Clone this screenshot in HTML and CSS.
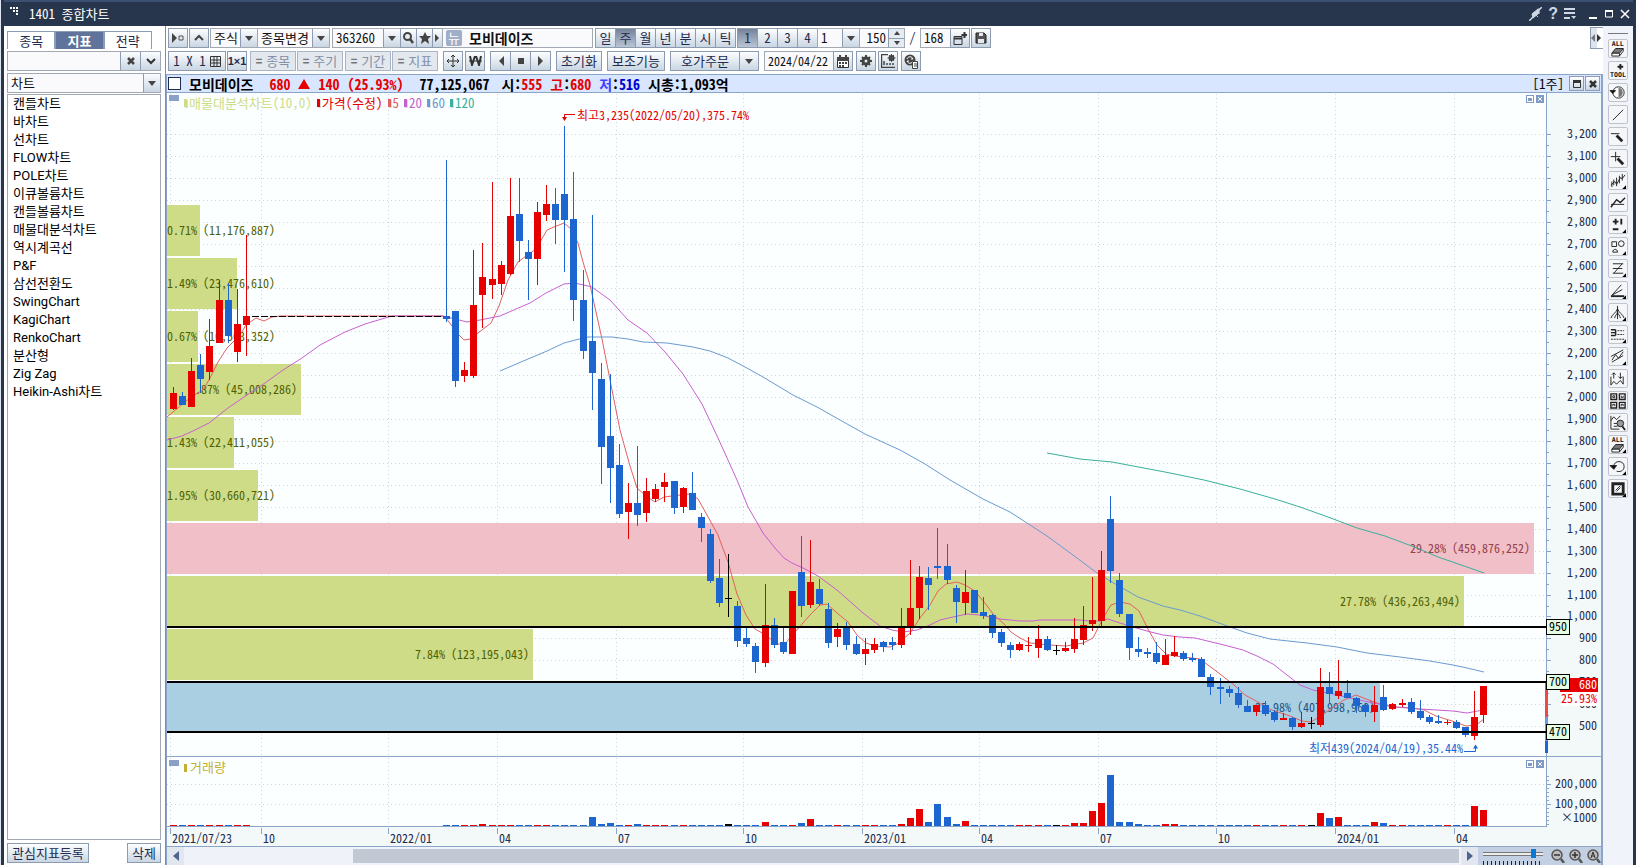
FILE: index.html
```html
<!DOCTYPE html>
<html lang="ko">
<head>
<meta charset="utf-8">
<title>1401 종합차트</title>
<link rel="stylesheet" href="styles.css">
</head>
<body>
<div class="window">
  <header class="titlebar">
    <svg class="grip" width="10" height="10" viewBox="0 0 10 10" fill="#fff"><path d="M0 0h2v2H0zM3 0h2v2H3zM6 0h2v2H6zM3 3h2v2H3zM6 3h2v2H6zM6 6h2v2H6z"/></svg>
    <h1>1401 종합차트</h1>
    <div class="winctl">
      <button aria-label="연결"><svg width="13" height="14" viewBox="0 0 13 14" stroke="#cfd8e4" fill="none"><path d="M0 14l4-4M9 4l4-4" stroke-width="1.500"/><path d="M4 11L3 7l6-5 1 4z" fill="#cfd8e4"/><path d="M4 5l5 5M10 1v6"/></svg></button>
      <button class="help" aria-label="도움말">?</button>
      <button aria-label="메뉴"><svg width="13" height="12" viewBox="0 0 13 12" fill="#cfd8e4"><path d="M0 0h11v2H0zM0 4h11v2H0zM0 9h6v2H0zM7 8h5l-2 3z"/></svg></button>
      <button class="gap" aria-label="최소화"><svg width="10" height="10"><path d="M1 8h8v2H1z" fill="#fff"/></svg></button>
      <button aria-label="최대화"><svg width="10" height="10"><path d="M1.500 2h7v6h-7z" fill="none" stroke="#fff"/><path d="M1 1h8v2H1z" fill="#fff"/></svg></button>
      <button aria-label="닫기"><svg width="10" height="10"><path d="M1 1l8 8M9 1L1 9" stroke="#fff" stroke-width="1.500"/></svg></button>
    </div>
  </header>
  <div class="body">
    <aside class="left">
      <nav class="tabs"><button>종목</button><button class="on">지표</button><button>전략</button></nav>
      <div class="field search"><input type="text" aria-label="지표 검색"><button aria-label="지우기"><svg width="8" height="8"><path d="M1 1l6 6M7 1L1 7" stroke="#444" stroke-width="2.500"/></svg></button><button aria-label="펼치기"><svg width="10" height="8"><path d="M1 2l4 4 4-4" stroke="#333" stroke-width="2" fill="none"/></svg></button></div>
      <label class="field pick"><select aria-label="분류"><option>차트</option></select><span class="arr"></span></label>
      <ul class="list">
        <li>캔들차트</li><li>바차트</li><li>선차트</li><li>FLOW차트</li><li>POLE차트</li><li>이큐볼륨차트</li><li>캔들볼륨차트</li><li>매물대분석차트</li><li>역시계곡선</li><li>P&amp;F</li><li>삼선전환도</li><li>SwingChart</li><li>KagiChart</li><li>RenkoChart</li><li>분산형</li><li>Zig Zag</li><li>Heikin-Ashi차트</li>
      </ul>
      <div class="leftfoot"><button class="btn">관심지표등록</button><button class="btn">삭제</button></div>
    </aside>

    <main class="main">
      <div class="bars">
        <div class="bar">
          <button class="btn sq" aria-label="이동"><svg width="12" height="10"><path d="M0 0l5 5-5 5z" fill="#444"/><path d="M7 3h4v4H7z" fill="none" stroke="#555"/></svg></button>
          <button class="btn sq" aria-label="위로"><svg width="10" height="8"><path d="M1 6l4-4 4 4" stroke="#444" stroke-width="2" fill="none"/></svg></button>
          <div class="group">
            <label class="field w47"><select aria-label="시장"><option>주식</option></select><span class="arr"></span></label>
            <label class="field w72"><select aria-label="종목변경"><option>종목변경</option></select><span class="arr"></span></label>
          </div>
          <div class="group g1">
            <label class="field w68"><input type="text" value="363260" aria-label="종목코드"><span class="arr"></span></label>
            <button class="btn w16" aria-label="검색"><svg width="11" height="12"><circle cx="4.500" cy="4.500" r="3.500" fill="none" stroke="#444" stroke-width="2"/><path d="M7 7l3 4" stroke="#444" stroke-width="2.500"/></svg></button>
            <button class="btn w16" aria-label="관심"><svg width="12" height="12"><path d="M6 0l2 4h4L9 7l1 5-4-3-4 3 1-5-3-3h4z" fill="#444"/></svg></button>
            <button class="btn w10" aria-label="다음"><svg width="5" height="8"><path d="M0 0l4 4-4 4z" fill="#444"/></svg></button>
            <div class="field w150 name"><span class="news">뉴</span><b>모비데이즈</b></div>
          </div>
          <div class="group seg g1"><button class="btn">일</button><button class="btn on">주</button><button class="btn">월</button><button class="btn">년</button><button class="btn">분</button><button class="btn">시</button><button class="btn">틱</button></div>
          <div class="group seg"><button class="btn on">1</button><button class="btn">2</button><button class="btn">3</button><button class="btn">4</button><label class="field w42"><select aria-label="단위"><option>1</option></select><span class="arr"></span></label><div class="field w46"><input class="num" type="text" value="150" aria-label="봉 개수"><span class="spin"><button aria-label="증가"></button><button aria-label="감소"></button></span></div></div>
          <span class="slash">/</span>
          <div class="group"><div class="field w30"><input type="text" value="168" aria-label="전체 개수"></div>
          <button class="btn sq" aria-label="새 창"><svg width="14" height="13" viewBox="0 0 14 13" fill="none" stroke="#333"><path d="M1 4.500h8v8H1z"/><path d="M1 6.500h8M11.500 0v6M8.500 3h6" stroke-width="2"/></svg></button></div>
          <button class="btn sq" aria-label="저장"><svg width="12" height="12" viewBox="0 0 12 12"><path d="M1 1h8l2 2v8H1z" fill="#555" stroke="#222"/><path d="M4 1h4v3H4zM3 7h6v4H3z" fill="#e4e9ef"/></svg></button>
        </div>
        <div class="bar two">
          <button class="btn w58">1 X 1 <svg width="11" height="11"><path d="M.500.500h10v10H.500zM0 4h11M0 7h11M4 0v11M7 0v11" fill="none" stroke="#333"/></svg></button>
          <button class="btn sq tiny">1×1</button>
          <button class="btn off g2"><i>=</i>종목</button><button class="btn off"><i>=</i>주기</button><button class="btn off g1"><i>=</i>기간</button><button class="btn off"><i>=</i>지표</button>
          <button class="btn sq g3" aria-label="이동"><svg width="14" height="14" fill="none" stroke="#333"><path d="M7 1v12M1 7h12M5 3l2-2 2 2M5 11l2 2 2-2M3 5L1 7l2 2M11 5l2 2-2 2"/></svg></button>
          <button class="btn sq g1" aria-label="원화"><svg width="13" height="10" fill="none" stroke="#333"><path d="M1 0l2 9 3-9 1 0 3 9 2-9" stroke-width="2"/><path d="M0 5h13"/></svg></button>
          <div class="group g3 seg"><button class="btn" aria-label="이전"><svg width="6" height="10"><path d="M6 0v10L1 5z" fill="#444"/></svg></button><button class="btn" aria-label="정지"><svg width="6" height="6"><path d="M0 0h6v6H0z" fill="#444"/></svg></button><button class="btn" aria-label="다음"><svg width="6" height="10"><path d="M0 0v10l5-5z" fill="#444"/></svg></button></div>
          <button class="btn w46 g3">초기화</button>
          <button class="btn w58 g3">보조기능</button>
          <div class="group g3"><button class="btn w70">호가주문</button><button class="btn sq" aria-label="호가주문 메뉴"><span class="tri"></span></button></div>
          <div class="group g3"><div class="field w70"><input class="date" type="text" value="2024/04/22" aria-label="날짜"></div><button class="btn sq" aria-label="달력"><svg width="12" height="13"><path d="M.500 2.500h11v10H.500z" fill="#fff" stroke="#333"/><path d="M0 2h12v4H0zM2 0h2v3H2zM8 0h2v3H8zM2 7h2v2H2zM5 7h2v2H5zM8 7h2v2H8zM2 10h2v2H2zM5 10h2v2H5z" fill="#444"/></svg></button></div>
          <button class="btn sq g2" aria-label="설정"><svg width="12" height="12"><circle cx="6" cy="6" r="3" fill="none" stroke="#444" stroke-width="3"/><path d="M6 0v3M6 9v3M0 6h3M9 6h3M2 2l2 2M8 8l2 2M10 2L8 4M4 8l-2 2" stroke="#444" stroke-width="2"/></svg></button>
          <button class="btn sq g1" aria-label="차트설정"><svg width="15" height="14" fill="none" stroke="#444"><path d="M7 .500H.500v13H14M3 11V7M6 11V9M9 11v-2M12 11v-2" stroke-width="1.500"/><circle cx="10.500" cy="4" r="2" stroke-width="2"/><path d="M10.500 0v8M6.500 4h8M8 1l5 6M13 1L8 7"/></svg></button>
          <button class="btn sq g2" aria-label="동기화"><svg width="15" height="15"><circle cx="6" cy="6" r="5.500" fill="#444"/><path d="M3 5c1-3 5-3 6 0H7M9 7c-1 3-5 3-6 0h2" stroke="#fff" fill="none"/><path d="M8.500 7.500h5v7h-5z" fill="#fff" stroke="#444"/><path d="M10 10h3M10 12h3" stroke="#444"/></svg></button>
        </div>
        <button class="fold" aria-label="접기"><svg width="10" height="8"><path d="M4 0v8L0 4z" fill="#777"/><path d="M6 0v8l4-4z" fill="#333"/></svg></button>
      </div>

      <section class="chartbox">
        <div class="quote">
          <input type="checkbox" aria-label="종목 선택">
          <b class="q-name">모비데이즈</b>
          <b class="up">680</b><svg width="12" height="10"><path d="M6 0l6 10H0z" fill="#e60000"/></svg><b class="up">140</b><b class="up">(25.93%)</b>
          <b class="q-vol">77,125,067</b>
          <b>시:<span class="up">555</span></b><b><span class="up">고</span>:<span class="up">680</span></b><b><span class="lo">저</span>:<span class="dn">516</span></b><b>시총:1,093억</b>
          <span class="period">[1주]</span>
          <button class="btn mini" aria-label="창 크기"><svg width="8" height="8"><path d="M.500.500h7v7h-7z" fill="none" stroke="#333"/><path d="M0 0h8v3H0z" fill="#333"/></svg></button>
          <button class="btn mini" aria-label="차트 닫기"><svg width="8" height="8"><path d="M1 1l6 6M7 1L1 7" stroke="#333" stroke-width="2.500"/></svg></button>
        </div>
        <div class="plot">
          <svg id="chart" viewBox="167 93 1434 754" preserveAspectRatio="xMinYMin meet"></svg>
          <div class="legend">
            <span class="c-prof">매물대분석차트(10,0)</span><span class="c-price">가격(수정)</span><span class="c-5">5</span><span class="c-20">20</span><span class="c-60">60</span><span class="c-120">120</span>
          </div>
        </div>
        <div class="scroll">
          <button aria-label="왼쪽"><svg width="6" height="10"><path d="M6 0v10L0 5z" fill="#4d6491"/></svg></button>
          <div class="track"><div class="thumb"></div></div>
          <button aria-label="오른쪽"><svg width="6" height="10"><path d="M0 0v10l6-5z" fill="#4d6491"/></svg></button>
          <div class="zoom">
            <div class="range"><input type="range" min="0" max="100" value="88" aria-label="확대"><span class="ticks"></span></div>
            <button aria-label="축소"><svg width="14" height="14"><circle cx="6" cy="6" r="5" fill="#bbb" stroke="#555" stroke-width="1.500"/><path d="M3 6h6" stroke="#333" stroke-width="1.500"/><path d="M10 10l3 4" stroke="#555" stroke-width="2.500"/></svg></button>
            <button aria-label="확대"><svg width="14" height="14"><circle cx="6" cy="6" r="5" fill="#bbb" stroke="#555" stroke-width="1.500"/><path d="M3 6h6M6 3v6" stroke="#333" stroke-width="1.500"/><path d="M10 10l3 4" stroke="#555" stroke-width="2.500"/></svg></button>
            <button aria-label="전체"><svg width="14" height="14"><circle cx="6" cy="6" r="5" fill="#bbb" stroke="#555" stroke-width="1.500"/><path d="M4 9l2-6 2 6M4 7h4" fill="none" stroke="#333"/><path d="M10 10l3 4" stroke="#555" stroke-width="2.500"/></svg></button>
          </div>
        </div>
      </section>
    </main>

    <aside class="tools" id="tools"><hr></aside>
  </div>
</div>
<script src="chart.js"></script>
</body>
</html>
```

FILE: styles.css
```css
* { box-sizing: border-box; }
body {
  margin: 0;
  background: #dfe5ee;
  color: #222c4e;
  font: 13px/16px "Noto Sans CJK KR", "Liberation Sans", sans-serif;
  font-feature-settings: "hwid";
}
button, input, select {
  margin: 0;
  padding: 0;
  border: 0;
  background: none;
  color: inherit;
  font: inherit;
  font-feature-settings: inherit;
  border-radius: 0;
}
svg { display: block; flex: none; }

.window {
  display: flex;
  flex-direction: column;
  height: 100vh;
  min-height: 600px;
  margin-left: 1px;
  border: solid #28364d;
  border-width: 0 3px 0 3px;
  background: #fff;
}
.titlebar {
  display: flex;
  align-items: center;
  height: 26px;
  flex: none;
  padding: 0 3px 0 6px;
  border-top: 2px solid #3b4f70;
  background: #28364d;
  color: #fff;
}
.grip { margin-bottom: 4px; }
.titlebar h1 {
  margin: 0 auto 0 9px;
  font-size: 13px;
  font-weight: 400;
}
.winctl { display: flex; align-items: center; gap: 6px; }
.winctl button { display: flex; align-items: center; }
.winctl .gap { margin-left: 5px; }
.winctl .help { color: #cfd8e4; font: bold 16px/16px "Liberation Sans", sans-serif; }

.body { display: flex; flex: 1; min-height: 0; }

/* indicator list */
.left {
  display: flex;
  flex-direction: column;
  width: 162px;
  flex: none;
  padding: 5px 4px 2px 3px;
  border-right: 1px solid #7f8da3;
}
.tabs { display: flex; height: 18px; margin-right: 9px; }
.tabs button {
  flex: 1;
  border: 1px solid #8b9cba;
  border-bottom: 0;
  line-height: 14px;
}
.tabs .on { background: #5f739b; color: #fff; font-weight: 700; }
.field {
  display: flex;
  height: 20px;
  border: 1px solid #a3a9b3;
  background: #fafafc;
  color: #111;
}
.field input, .field select {
  flex: 1;
  width: 10px;
  min-width: 0;
  padding-left: 3px;
  appearance: none;
  outline: 0;
}
.search { margin-top: 2px; }
.search button {
  display: flex;
  align-items: center;
  justify-content: center;
  width: 20px;
  border-left: 1px solid #8c9bb0;
  background: linear-gradient(#fbfdff, #c9d6e3);
}
.pick { margin-top: 2px; }
.arr, .tri { display: flex; align-items: center; justify-content: center; }
.arr {
  width: 17px;
  flex: none;
  border-left: 1px solid #8c9bb0;
  background: linear-gradient(#fbfdff, #c9d6e3);
}
.arr::after, .tri::after {
  content: "";
  border: 4px solid transparent;
  border-top: 5px solid #444;
  border-bottom: 0;
}
.list {
  flex: 1;
  margin: 1px 0 3px;
  padding: 0 0 0 5px;
  border: 1px solid #a3a9b3;
  overflow: hidden;
  list-style: none;
  color: #000;
  font-family: Roboto, "Noto Sans CJK KR", sans-serif;
  font-feature-settings: normal;
}
.list li { font-size: 13px; line-height: 18px; }
.leftfoot { display: flex; justify-content: space-between; }

.btn {
  display: flex;
  align-items: center;
  justify-content: center;
  flex: none;
  height: 20px;
  padding: 0 4px;
  border: 1px solid #8c9bb0;
  background: linear-gradient(#fdfeff, #c9d6e3);
  line-height: 16px;
  white-space: nowrap;
}

/* toolbars */
.main { display: flex; flex-direction: column; flex: 1; min-width: 0; }
.bars { position: relative; height: 48px; flex: none; padding: 2px 0 0 2px; }
.bar { display: flex; gap: 1px; height: 20px; }
.bar.two { margin-top: 3px; }
.group { display: flex; }
.group > * + * { margin-left: -1px; }
.sq { width: 20px; padding: 0; }
.tiny { font: bold 11px/16px "Liberation Sans", sans-serif; }
.off { width: 46px; background: #e3e8ef; border-color: #a9b4c4; color: #8390a6; gap: 4px; padding: 0; }
.off i { font-style: normal; font-weight: 700; color: #777; }
.g1 { margin-left: 1px; }
.g2 { margin-left: 2px; }
.g3 { margin-left: 4px; }
.w10 { width: 11px; padding: 0; }
.w16 { width: 17px; padding: 0; }
.w30 { width: 31px; }
.w42 { width: 43px; }
.w46 { width: 46px; }
.w47 { width: 48px; }
.w58 { width: 58px; gap: 4px; }
.w68 { width: 69px; }
.w70 { width: 70px; }
.w72 { width: 73px; }
.w150 { width: 151px; }
.date { font-size: 12px; }
.name { align-items: center; gap: 7px; padding-left: 3px; font-size: 14px; }
.news {
  width: 16px;
  border-radius: 2px;
  background: #9fafc9;
  color: #fff;
  font-size: 13px;
  text-align: center;
}
.seg .btn { width: 21px; padding: 0; }
.seg .on { background: linear-gradient(#75839a, #b9c4d4); }
.field .num { text-align: right; padding-right: 2px; }
.spin { display: flex; flex-direction: column; width: 16px; border-left: 1px solid #8c9bb0; }
.spin button {
  display: flex;
  align-items: center;
  justify-content: center;
  flex: 1;
  background: #e4ebf2;
}
.spin button::after { content: ""; border: 3px solid transparent; border-bottom: 4px solid #444; border-top: 0; }
.spin button + button { border-top: 1px solid #8c9bb0; }
.spin button + button::after { border-bottom: 0; border-top: 4px solid #444; }
.slash { width: 13px; line-height: 20px; text-align: center; }
.fold {
  position: absolute;
  top: 1px;
  right: 0;
  width: 13px;
  height: 22px;
  display: flex;
  align-items: center;
  border: 1px solid #8c9bb0;
  border-right: 0;
  background: linear-gradient(90deg, #dde4ee 50%, #fff 50%);
}

/* chart window */
.chartbox {
  display: flex;
  flex-direction: column;
  flex: 1;
  min-height: 0;
  border: 1px solid #8aa5c8;
  border-width: 1px 2px 0 1px;
}
.quote {
  display: flex;
  align-items: center;
  gap: 8px;
  height: 18px;
  flex: none;
  padding: 0 1px;
  border-bottom: 1px solid #8aa5c8;
  background: #d8e6ff;
  color: #000;
  font-size: 14px;
  white-space: nowrap;
}
.quote input {
  width: 13px;
  height: 13px;
  appearance: none;
  border: 1px solid #222c4e;
  background: #fff;
}
.q-name { margin-right: 8px; }
.q-vol { margin: 0 4px 0 8px; }
.up { color: #e60000; }
.lo { color: #4040ff; }
.dn { color: #0000d0; }
.period { margin: 0 -3px 0 auto; font-size: 13px; }
.mini { width: 15px; height: 15px; padding: 0; }
.mini + .mini { margin-left: -7px; }
.plot { position: relative; flex: 1; min-height: 0; background: #fbffff; }
#chart { width: 100%; height: 100%; }
#chart text { font-size: 12px; font-feature-settings: "hwid"; }
.crisp { shape-rendering: crispEdges; }
.legend {
  position: absolute;
  left: 17px;
  top: 2px;
  display: flex;
  gap: 5px;
}
.legend span { display: flex; align-items: center; gap: 2px; font-size: 13px; }
.legend span::before { content: ""; width: 3px; height: 8px; background: currentColor; box-shadow: 1px 1px #d8dde0; }
.c-prof { color: #cedc88; }
.c-price { color: #e60000; }
.c-5 { color: #e46060; }
.c-20 { color: #c85fd0; }
.c-60 { color: #6a9bd0; }
.c-120 { color: #3ab09c; }

.scroll { display: flex; height: 18px; flex: none; background: #eff3f9; }
.scroll > button {
  display: flex;
  align-items: center;
  justify-content: center;
  width: 17px;
  background: #e2e6ee;
}
.track { flex: 1; padding: 2px 2px 2px 169px; }
.thumb { height: 100%; background: #c3c8d5; }
.zoom { display: flex; align-items: center; gap: 4px; width: 123px; padding: 0 1px 0 5px; background: #c3d0e3; }
.zoom button { width: 14px; }
.range { display: flex; flex-direction: column; justify-content: space-between; width: 62px; height: 100%; margin-right: 4px; }
.range input { width: 60px; height: 12px; appearance: none; background: linear-gradient(#777, #777) 0 5px / 100% 1px no-repeat, linear-gradient(#777, #777) 0 8px / 100% 1px no-repeat, linear-gradient(#eee, #eee) 0 5px / 100% 4px no-repeat; }
.range input::-webkit-slider-thumb { appearance: none; width: 5px; height: 9px; background: #0a78d6; }
.ticks { height: 4px; background: repeating-linear-gradient(90deg, #222 0 1px, transparent 1px 4px); }

/* drawing tools */
.tools {
  display: flex;
  flex-direction: column;
  align-items: center;
  gap: 3px;
  width: 30px;
  flex: none;
  background: #f0f3f9;
}
.tools hr { width: 20px; margin: 7px 0 2px; border: 0; border-top: 1px solid #777; }
.tools button {
  display: flex;
  align-items: center;
  justify-content: center;
  width: 20px;
  height: 19px;
  border: 1px solid #c0c3c8;
  border-radius: 2px;
  background: #f5f6f9;
}
.tools svg { fill: none; stroke: #222; }
.tools text { fill: #111; stroke: none; font: bold 7px/7px "DejaVu Sans Mono", monospace; }
```

FILE: chart.js
```js
// Each row: high, body top, body bottom, low, colour (r = up, b = down, k = unchanged)
const first = `387 393 409 410 r|392 396 405 405 b|358 371 407 407 r|354 365 379 393 b|319 346 372 380 r|281 300 343 343 r|283 300 336 343 b|289 324 352 362 r|235 316 325 356 r`;
const rest = `160 316 319 322 b|311 311 381 387 b|362 370 376 382 r|250 305 376 378 r|243 277 295 328 r|182 279 285 299 r|261 265 284 295 r|178 216 274 275 r|178 214 241 262 b|240 252 259 300 b|202 212 259 285 r|185 204 215 221 r|188 204 220 244 b|126 194 220 272 b|172 219 300 321 b|270 300 351 359 b|215 341 373 410 b|363 379 447 484 b|374 436 468 503 b|444 465 514 518 b|483 503 512 539 r|446 503 515 526 b|478 491 513 522 r|484 489 499 502 r|473 482 487 502 r|481 481 508 514 b|487 488 507 513 r|472 493 510 510 b|513 517 528 542 b|529 534 581 583 b|559 578 603 607 b|554 598 599 617 k|601 606 641 647 b|628 638 644 647 b|643 646 662 673 b|584 625 663 667 r|618 625 645 648 b|628 642 652 654 b|591 591 654 654 r|536 572 606 617 b|540 582 605 608 r|579 589 604 606 b|603 609 643 648 b|623 629 637 647 r|622 627 645 650 b|636 644 654 655 b|638 649 654 665 r|638 644 650 653 r|641 642 647 652 b|637 642 645 650 b|608 627 645 648 r|560 608 627 635 r|566 577 608 619 r|567 578 585 610 b|528 566 568 579 b|544 566 580 584 b|585 588 602 623 b|570 592 603 615 r|590 590 613 613 b|597 612 616 619 b|614 615 633 638 b|629 632 643 647 b|642 645 650 658 b|642 644 650 651 r|637 645 646 652 r|625 639 648 658 r|636 639 650 651 b|645 650 651 655 k|642 648 651 652 r|618 639 649 653 r|606 625 640 645 r|577 620 624 631 r|551 570 621 626 r|496 519 571 583 b|573 580 614 617 b|614 614 648 660 b|637 649 652 657 b|648 652 654 658 b|642 653 662 664 b|639 655 665 665 r|636 652 656 657 r|651 653 659 661 b|653 658 660 662 b|657 659 677 677 b|674 677 687 695 b|678 687 689 704 b|686 689 693 697 b|687 693 705 708 b|700 706 712 712 b|705 705 712 716 r|701 705 714 716 b|710 712 720 722 b|713 718 720 720 r|717 718 727 730 b|712 723 727 728 r|717 723 724 729 k|668 687 725 727 r|672 687 694 704 b|660 691 696 699 r|680 693 698 698 b|697 698 706 713 b|704 705 712 717 b|686 705 712 722 r|685 697 710 711 b|703 704 709 710 r|699 703 705 707 r|698 702 712 714 b|700 711 718 720 b|715 717 722 724 b|715 721 723 724 b|720 722 723 725 r|720 722 728 729 b|727 727 735 737 b|691 717 736 740 r|686 686 715 723 r`;

const volume = {34: 2, 46: 9, 47: 2, 48: 3, 51: 2, 61: 2, 65: 4, 69: 3, 70: 7, 80: 2, 81: 8, 82: 17, 83: 4, 84: 22, 85: 9, 86: 2, 87: 5, 99: 3, 100: 3, 101: 15, 102: 23, 103: 51, 104: 4, 105: 4, 106: 2, 109: 2, 110: 2, 126: 13, 127: 8, 128: 9, 132: 4, 133: 3, 143: 20, 144: 16};

const averages = {
  '#e46060': '167,417 173,412 191,397 203,390 210,378 218,362 227,348 240,335 246,325 256,318 264,321 272,317 280,316 443,316 446,318 458,334 464,340 470,339 478,333 491,323 499,306 508,280 518,262 526,256 536,249 547,230 554,227 564,223 571,229 578,243 583,262 590,285 602,339 612,390 620,430 630,466 637,488 646,496 655,502 664,497 680,495 690,494 698,499 707,515 718,535 728,562 737,594 746,615 755,629 764,634 777,644 785,644 795,632 810,615 820,605 827,604 837,613 848,622 857,635 866,643 875,646 890,647 899,643 910,633 920,618 930,605 938,591 946,584 957,582 965,585 975,591 984,602 994,615 1003,623 1011,632 1020,638 1030,643 1050,645 1066,646 1083,643 1093,638 1102,620 1111,605 1120,602 1130,604 1139,611 1148,629 1157,645 1166,654 1175,656 1200,659 1208,665 1220,674 1234,685 1245,695 1256,701 1272,710 1290,716 1302,721 1311,722 1322,715 1332,708 1344,700 1356,695 1366,699 1380,704 1392,707 1412,708 1424,710 1436,716 1452,721 1466,726 1476,725 1484,719',
  '#c85fd0': '167,440 182,436 195,430 209,423 228,408 247,395 265,383 283,370 302,358 320,345 345,332 365,324 385,318 392,316 443,316 455,319 467,322 480,320 500,316 516,309 530,303 546,293 564,284 575,283 592,287 610,300 628,320 647,333 665,352 683,374 702,404 718,438 737,480 748,507 755,519 763,533 775,548 784,558 792,563 803,568 818,576 837,590 863,613 880,626 892,630 903,632 917,630 930,625 940,620 953,617 967,614 980,615 1000,619 1020,621 1033,621 1040,620 1080,620 1090,621 1100,621 1108,619 1120,623 1133,627 1147,631 1163,635 1180,637 1195,638 1220,644 1243,650 1257,656 1273,664 1287,675 1300,685 1313,690 1333,694 1350,698 1373,703 1397,707 1420,709 1453,711 1467,713 1483,710',
  '#6a9bd0': '500,371 528,359 547,351 564,343 587,337 612,337 628,339 643,342 667,343 693,347 710,351 728,358 745,367 763,377 793,395 817,407 840,420 865,434 900,450 925,464 950,480 983,499 1010,512 1047,536 1077,558 1097,573 1117,585 1138,597 1163,606 1180,610 1200,616 1230,627 1247,633 1270,639 1307,643 1337,647 1367,653 1400,657 1430,661 1453,665 1467,668 1484,672',
  '#3ab09c': '1047,453 1080,459 1112,462 1165,472 1204,480 1240,489 1275,499 1300,507 1328,517 1357,528 1385,536 1417,548 1438,557 1467,567 1484,573'
};

// right edge, top, colour, label, label x, anchor
const profile = [
  [200, 205, 'g', '0.71% (11,176,887)', 167, 'start'],
  [237, 258, 'g', '1.49% (23,476,610)', 167, 'start'],
  [198, 311, 'g', '0.67% (10,563,352)', 167, 'start'],
  [301, 364, 'g', '2.87% (45,008,286)', 297, 'end'],
  [234, 417, 'g', '1.43% (22,411,055)', 167, 'start'],
  [258, 470, 'g', '1.95% (30,660,721)', 167, 'start'],
  [1534, 523, 'p', '29.28% (459,876,252)', 1530, 'end'],
  [1464, 576, 'g', '27.78% (436,263,494)', 1460, 'end'],
  [533, 629, 'g', '7.84% (123,195,043)', 529, 'end'],
  [1380, 682, 'b', '25.98% (407,998,960)', 1375, 'end']
];
const bandFill = {g: '#cedc88', p: '#f0bfc7', b: '#aacfe3'};
const bandText = {g: '#4f6000', p: '#96404c', b: '#1c5484'};
const ink = {r: '#e60000', b: '#1d66d0', k: '#000'};

const out = [];
const rect = (x, y, w, h, fill) => out.push(`<rect class="crisp" x="${x}" y="${y}" width="${w}" height="${h}" fill="${fill}"/>`);
const text = (x, y, s, fill, anchor = 'start') => out.push(`<text x="${x}" y="${y}" fill="${fill}" text-anchor="${anchor}">${s}</text>`);
const line = (x1, y1, x2, y2, stroke, extra = '') => out.push(`<line class="crisp" x1="${x1}" y1="${y1}" x2="${x2}" y2="${y2}" stroke="${stroke}" ${extra}/>`);
const priceY = p => Math.round(134 + (3200 - p) * 0.2193);

const frame = '#8aa5c8';
rect(1547, 93, 54, 754, '#f3f8f8');
rect(167, 827, 1434, 20, '#f3f8f8');

const dates = [[170, '2021/07/23'], [261, '10'], [388, '2022/01'], [497, '04'], [616, '07'], [743, '10'], [862, '2023/01'], [979, '04'], [1098, '07'], [1216, '10'], [1335, '2024/01'], [1454, '04']];
const dots = 'stroke-dasharray="1 3"';
for (const [x, s] of dates) {
  line(x + .5, 94, x + .5, 826, '#d5d3dc', dots);
  line(x + .5, 828, x + .5, 834, frame);
  text(x + 2, 843, s, '#222c4e');
}
for (let p = 3200; p >= 500; p -= 100) {
  const y = priceY(p);
  line(167, y + .5, 1546, y + .5, '#d5d3dc', dots);
  line(1546, y + .5, 1551, y + .5, frame);
  line(1546, y + 11.5, 1549, y + 11.5, frame);
  text(1597, y + 4, p.toLocaleString('en-US'), '#222c4e', 'end');
}
for (const y of [784, 804]) {
  line(167, y + .5, 1546, y + .5, '#d5d3dc', dots);
  line(1546, y + .5, 1551, y + .5, frame);
}
for (let y = 776; y < 826; y += 4) line(1546, y + .5, 1549, y + .5, frame);
text(1597, 788, '200,000', '#222c4e', 'end');
text(1597, 808, '100,000', '#222c4e', 'end');
text(1597, 822, '×1000', '#222c4e', 'end');

for (const [right, top, c, label, x, anchor] of profile) {
  rect(167, top, right - 167, 51, bandFill[c]);
  text(x, top + 30, label, bandText[c], anchor);
}
for (const [stroke, points] of Object.entries(averages))
  out.push(`<polyline points="${points}" fill="none" stroke="${stroke}"/>`);

const bars = first.split('|').concat(Array(21).fill('316 316 317 316 k'), rest.split('|'));
bars.forEach((row, i) => {
  const [hi, top, bottom, low, c] = row.split(' ');
  const x = Math.floor(173.5 + i * 9.1);
  if (+low > +hi) rect(x, hi, 1, low - hi, ink[c]);
  rect(x - 3, top, 7, bottom - top, ink[c]);
  if (i < 9 || i > 29) rect(x - 3, 826 - (volume[i] || 1), 7, volume[i] || 1, ink[c]);
});

line(1546.5, 93, 1546.5, 826, frame);
line(167, 826.5, 1547, 826.5, frame);
line(167, 756.5, 1601, 756.5, frame);
line(167, 846.5, 1601, 846.5, frame);
rect(1545, 683, 3, 34, '#f04848');
rect(1545, 717, 3, 24, '#6a9be0');
rect(1545, 741, 3, 12, '#1d66d0');

rect(1560, 678, 38, 14, '#e60000');
text(1597, 689, '680', '#fff', 'end');
rect(1561, 692, 38, 14, '#fff');
text(1597, 703, '25.93%', '#e60000', 'end');
for (const [y, s] of [[627, '950'], [682, '700'], [732, '470']]) {
  rect(167, y - 1, 1380, 2, '#000');
  out.push(`<rect class="crisp" x="1546.5" y="${y - 7.5}" width="23" height="15" fill="#e4ffe4" stroke="#000"/>`);
  text(1549, y + 4, s, '#000');
}

text(577, 120, '최고3,235(2022/05/20),375.74%', '#e60000');
out.push('<path d="M575 114.500H564.500V119" fill="none" stroke="#e60000"/><path d="M562 117h5l-2.500 4z" fill="#e60000"/>');
text(1463, 753, '최저439(2024/04/19),35.44%', '#1d66d0', 'end');
out.push('<path d="M1464 751.500H1475.500V747" fill="none" stroke="#1d66d0"/><path d="M1473 748.500h5l-2.500-4z" fill="#1d66d0"/>');

for (const y of [95, 760]) {
  rect(169, y, 10, 6, '#8aa0c4');
  rect(1526, y, 8, 8, '#7f9ac4');
  rect(1527, y + 1, 6, 6, '#fff');
  rect(1528, y + 3, 4, 3, '#7f9ac4');
  rect(1536, y, 8, 8, '#7f9ac4');
  out.push(`<path d="M1538 ${y + 2}l4 4M1542 ${y + 2}l-4 4" stroke="#fff"/>`);
}
rect(184, 764, 3, 8, '#c4b030');
out.push('<text x="190" y="772" fill="#c4b030" style="font-size:13px">거래량</text>');
document.getElementById('chart').innerHTML = out.join('');

const corner = '<path d="M18 14v4h-4z" fill="#000" stroke="none"/>';
const eraser = '<text x="3" y="6">ALL</text><path d="M3 14l4-5h8l-4 5z" fill="#777"/><path d="M3 14h8v3H3z" fill="#fff"/><path d="M11 17l4-5V9"/>';
const icons = [
  ['전체 지우기', eraser],
  ['도구 추가', '<path d="M12 2v6M9 5h6" stroke-width="2"/><text x="1" y="16">TOOL</text>'],
  ['되돌리기', '<circle cx="10" cy="9" r="6" fill="#fff"/><path d="M10 4c6 0 6 10 0 10z" fill="#777" stroke="none"/><path d="M1 7h6L4 10z" fill="#111"/>'],
  ['추세선', '<path d="M4 15L15 4"/>'],
  ['선 그리기', '<path d="M2 6h9"/><path d="M8 8l6 6" stroke-width="3"/>'],
  ['십자선', '<path d="M2 7h10M7 2v10"/><path d="M9 9l6 6" stroke-width="3"/>'],
  ['파동', '<path d="M3 16v-6M5 14V8M8 15V6M11 12V4M14 9V2M2 14l4-4 2 3 4-7 2 1 3-4"/>' + corner],
  ['꺾은선', '<path d="M2 14l6-8 4 3 5-5" stroke-width="1.500"/><path d="M2 11h14"/>'],
  ['기호', '<path d="M7 3v6M4 6h6M13 3v6M4 14h6" stroke-width="2"/>' + corner],
  ['도형', '<path d="M3 4h5v5H3zM4 15c0-4 5-4 5 0z"/><circle cx="13" cy="6" r="3"/>' + corner],
  ['피보나치', '<path d="M4 4h11M4 9h10M4 14h11M14 4L5 14"/>' + corner],
  ['부채꼴', '<path d="M2 15h14" stroke-width="2"/><path d="M3 14L13 3M3 14l11-6"/>' + corner],
  ['사이클', '<path d="M9 2v14M9 5C8 9 3 11 2 15M9 5c1 4 6 6 7 10M9 8c0 3-3 4-3 7M9 8c0 3 3 4 3 7"/>' + corner],
  ['수평선', '<path d="M2 4h5M2 7h5M2 10h5M7 4v6" stroke-width="1.500"/><path d="M9 5h7M9 9h7M2 14h15" stroke-dasharray="2 1"/>' + corner],
  ['채널', '<path d="M2 9L15 2M3 15l12-7M3 13l4-6 3 4 5-7"/>' + corner],
  ['패턴', '<path d="M2 7v9l3-4 3 3 4-4 3 4V7M5 9V3M3 5l2-2 2 2M12 3v6M10 7l2 2 2-2"/>'],
  ['주기 분할', '<path d="M2 2h6v6H2zM11 2h6v6h-6zM2 11h6v6H2zM11 11h6v6h-6z" stroke-width="1.500"/><path d="M4 4h2v2H4zM13 4v2h2V4M4 15v-2h2v2M13 15v-2h2v2"/>'],
  ['분석', '<path d="M2 2v14h9M2 7l3-4 3 3 4-4M5 10h4M5 13h4"/><circle cx="12" cy="10" r="3.500" fill="#999"/><path d="M14 13l3 4" stroke-width="2"/>'],
  ['선택 지우기', eraser + corner],
  ['되돌리기 목록', '<path d="M5 9c0-7 11-7 11 0 0 5-5 6-8 5"/><path d="M1 8h7l-3 4z" fill="#111"/>' + corner],
  ['전체화면', '<path d="M4 4h11v11H4z" stroke-width="3"/><path d="M7 11l5-5M8 12l4-4"/>' + corner]
];
document.getElementById('tools').insertAdjacentHTML('beforeend', icons.map(([name, art]) =>
  `<button aria-label="${name}"><svg width="18" height="17" viewBox="0 0 19 18">${art}</svg></button>`).join(''));
```
